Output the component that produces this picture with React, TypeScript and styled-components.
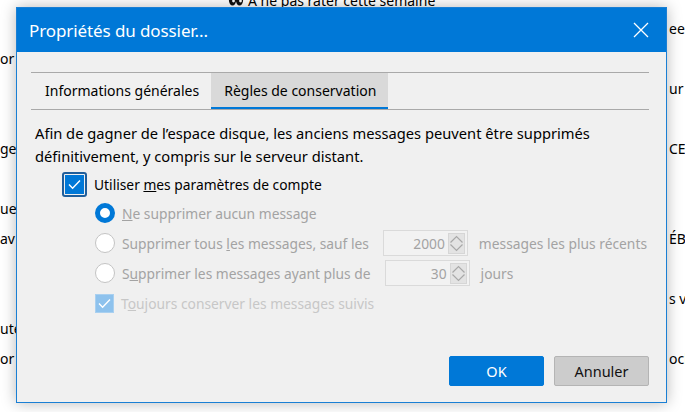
import React from "react";
import styled, { createGlobalStyle } from "styled-components";

const GlobalStyle = createGlobalStyle`
  html, body {
    margin: 0;
    padding: 0;
    background: #ffffff;
  }
  body {
    font-family: "Segoe UI", "Noto Sans", "Open Sans", sans-serif;
  }
  * {
    box-sizing: border-box;
  }
`;

const FONT = `"Segoe UI", "Noto Sans", "Open Sans", sans-serif`;

const Screen = styled.div`
  position: relative;
  width: 685px;
  height: 412px;
  overflow: hidden;
  background: #ffffff;
  font-family: ${FONT};
  font-size: 14px;
  color: #000;
`;

/* page behind the dialog */
const Headline = styled.div`
  display: flex;
  align-items: center;
  gap: 4px;
  height: 20px;
  margin-top: -10px;
  padding-left: 228px;
  white-space: nowrap;
`;

const Feed = styled.div`
  display: grid;
  grid-template-columns: 669px 1fr;
  grid-auto-rows: 30px;
  margin-top: 3px;
`;

const FeedCell = styled.div`
  display: flex;
  align-items: center;
  white-space: nowrap;
  overflow: hidden;
`;

/* dialog */
const Dialog = styled.div`
  position: absolute;
  left: 16px;
  top: 7px;
  width: 651px;
  height: 396px;
  display: flex;
  flex-direction: column;
  border: 1px solid #1a7fd4;
  box-shadow: 0 0 14px rgba(0, 0, 0, 0.28);
  background: #f0f0f0;
`;

const TitleBar = styled.div`
  display: flex;
  align-items: center;
  height: 44px;
  padding-left: 12px;
  background: #0078d7;
  color: #ffffff;
`;

const Title = styled.div`
  flex: 1;
  font-size: 17px;
  letter-spacing: -0.1px;
`;

const CloseButton = styled.div`
  display: flex;
  align-items: center;
  justify-content: center;
  width: 50px;
  height: 44px;
`;

const Body = styled.div`
  flex: 1;
  display: flex;
  flex-direction: column;
  padding: 20px 17px 16px 14px;
`;

const TabStrip = styled.div`
  display: flex;
  height: 38px;
  border-top: 1px solid #a9a9a9;
  border-bottom: 1px solid #a9a9a9;
  padding-left: 1px;
`;

const Tab = styled.div<{ $active?: boolean }>`
  display: flex;
  align-items: center;
  padding: 0 12px 2px 13px;
  font-size: 14px;
  background: ${(p) => (p.$active ? "#d9d9d9" : "transparent")};
  box-shadow: ${(p) => (p.$active ? "inset 0 -2px 0 #0078d7" : "none")};
`;

const Intro = styled.p`
  margin: 12px 0 0 4px;
  font-size: 14.7px;
  line-height: 23px;
`;

const Row = styled.div<{ $indent: number; $height: number }>`
  display: flex;
  align-items: center;
  height: ${(p) => p.$height}px;
  padding-left: ${(p) => p.$indent}px;
  font-size: 13.8px;
  white-space: nowrap;
`;

const Options = styled.div`
  display: flex;
  flex-direction: column;
  margin-top: 2px;
`;

const Label = styled.span<{ $tone?: "normal" | "disabled" | "faint"; $after?: boolean }>`
  margin-left: ${(p) => (p.$after ? 0 : 7)}px;
  color: ${(p) =>
    p.$tone === "disabled" ? "#a3a3a3" : p.$tone === "faint" ? "#c7c7c7" : "#000"};
`;

const FocusRing = styled.span`
  flex-shrink: 0;
  display: flex;
  align-items: center;
  justify-content: center;
  width: 25px;
  height: 25px;
  border: 2px solid #1f5e9b;
  border-radius: 3px;
`;

const CheckBox = styled.span<{ $muted?: boolean }>`
  flex-shrink: 0;
  display: flex;
  align-items: center;
  justify-content: center;
  width: 19px;
  height: 19px;
  background: ${(p) => (p.$muted ? "#8ec2ed" : "#0078d7")};
  border: 1px solid ${(p) => (p.$muted ? "#a9d0f0" : "#0078d7")};
`;

const Radio = styled.span<{ $checked?: boolean }>`
  flex-shrink: 0;
  display: inline-block;
  width: 20px;
  height: 20px;
  border-radius: 50%;
  background: #ffffff;
  border: ${(p) => (p.$checked ? "5px solid #0078d7" : "1px solid #c4c4c4")};
`;

const Spin = styled.span`
  flex-shrink: 0;
  display: flex;
  align-items: center;
  width: 85px;
  height: 26px;
  margin: 0 11px 0 14px;
  padding: 0 2px 0 6px;
  border: 1px solid #dadada;
  background: #f2f2f2;
  color: #a3a3a3;
`;

const SpinValue = styled.span`
  flex: 1;
  text-align: right;
  padding-right: 3px;
`;

const SpinArrows = styled.span`
  display: flex;
  align-items: center;
  justify-content: center;
  width: 17px;
  height: 21px;
  background: #e3e3e3;
  border: 1px solid #d6d6d6;
`;

const Footer = styled.div`
  display: flex;
  justify-content: flex-end;
  gap: 10px;
  margin-top: auto;
`;

const Button = styled.div<{ $primary?: boolean }>`
  display: flex;
  align-items: center;
  justify-content: center;
  width: 95px;
  height: 30px;
  border-radius: 2px;
  font-size: 14.5px;
  background: ${(p) => (p.$primary ? "#0078d7" : "#cccccc")};
  border: 1px solid ${(p) => (p.$primary ? "#0078d7" : "#b4b4b4")};
  color: ${(p) => (p.$primary ? "#ffffff" : "#111")};
`;

const Check = ({ color = "#fff" }: { color?: string }) => (
  <svg width="15" height="15" viewBox="0 0 15 15">
    <path d="M2 7.6 L5.6 11.2 L13 3.6" fill="none" stroke={color} strokeWidth="1.4" />
  </svg>
);

const Diamond = () => (
  <svg width="15" height="17" viewBox="0 0 15 17">
    <path d="M1.5 7.5 L7.5 1.5 L13.5 7.5" fill="none" stroke="#a8a8a8" strokeWidth="1.2" />
    <path d="M1.5 9.5 L7.5 15.5 L13.5 9.5" fill="none" stroke="#a8a8a8" strokeWidth="1.2" />
  </svg>
);

const Eyes = () => (
  <svg width="16" height="14" viewBox="0 0 16 14">
    <ellipse cx="4.5" cy="7" rx="3.6" ry="5.5" fill="#111" />
    <ellipse cx="11.5" cy="7" rx="3.6" ry="5.5" fill="#111" />
    <circle cx="5.5" cy="8" r="1.4" fill="#fff" />
    <circle cx="12.5" cy="8" r="1.4" fill="#fff" />
  </svg>
);

// what peeks out on either side of the dialog, one entry per 30px row
const feed: [string, string][] = [
  ["", "eep"],
  ["or Linux", ""],
  ["", "ur Vous"],
  ["", ""],
  ["ger", "CES"],
  ["", ""],
  ["ues", ""],
  ["av", "ÉBRITÉS"],
  ["", ""],
  ["", "s vents"],
  ["ute", ""],
  ["or Linux", "ochain"],
];

export default function App() {
  return (
    <Screen>
      <GlobalStyle />
      <Headline>
        <Eyes />
        <span>À ne pas rater cette semaine</span>
      </Headline>
      <Feed>
        {feed.map(([left, right], i) => (
          <React.Fragment key={i}>
            <FeedCell>{left}</FeedCell>
            <FeedCell>{right}</FeedCell>
          </React.Fragment>
        ))}
      </Feed>

      <Dialog>
        <TitleBar>
          <Title>Propriétés du dossier...</Title>
          <CloseButton>
            <svg width="16" height="16" viewBox="0 0 16 16">
              <path d="M1 1 L15 15 M15 1 L1 15" stroke="#fff" strokeWidth="1.3" />
            </svg>
          </CloseButton>
        </TitleBar>

        <Body>
          <TabStrip>
            <Tab>Informations générales</Tab>
            <Tab $active>Règles de conservation</Tab>
          </TabStrip>

          <Intro>
            Afin de gagner de l’espace disque, les anciens messages peuvent être supprimés
            <br />
            définitivement, y compris sur le serveur distant.
          </Intro>

          <Row $indent={31} $height={24} style={{ marginTop: 4 }}>
            <FocusRing>
              <CheckBox>
                <Check />
              </CheckBox>
            </FocusRing>
            <Label>
              Utiliser <u>m</u>es paramètres de compte
            </Label>
          </Row>

          <Options>
            <Row $indent={64} $height={30}>
              <Radio $checked />
              <Label $tone="disabled">
                <u>N</u>e supprimer aucun message
              </Label>
            </Row>
            <Row $indent={64} $height={30}>
              <Radio />
              <Label $tone="disabled">
                Supprimer tous <u>l</u>es messages, sauf les
              </Label>
              <Spin>
                <SpinValue>2000</SpinValue>
                <SpinArrows>
                  <Diamond />
                </SpinArrows>
              </Spin>
              <Label $tone="disabled" $after>
                messages les plus récents
              </Label>
            </Row>
            <Row $indent={64} $height={30}>
              <Radio />
              <Label $tone="disabled">
                S<u>u</u>pprimer les messages ayant plus de
              </Label>
              <Spin>
                <SpinValue>30</SpinValue>
                <SpinArrows>
                  <Diamond />
                </SpinArrows>
              </Spin>
              <Label $tone="disabled" $after>
                jours
              </Label>
            </Row>
            <Row $indent={64} $height={30}>
              <CheckBox $muted>
                <Check />
              </CheckBox>
              <Label $tone="faint">
                T<u>o</u>ujours conserver les messages suivis
              </Label>
            </Row>
          </Options>

          <Footer>
            <Button $primary>OK</Button>
            <Button>Annuler</Button>
          </Footer>
        </Body>
      </Dialog>
    </Screen>
  );
}
